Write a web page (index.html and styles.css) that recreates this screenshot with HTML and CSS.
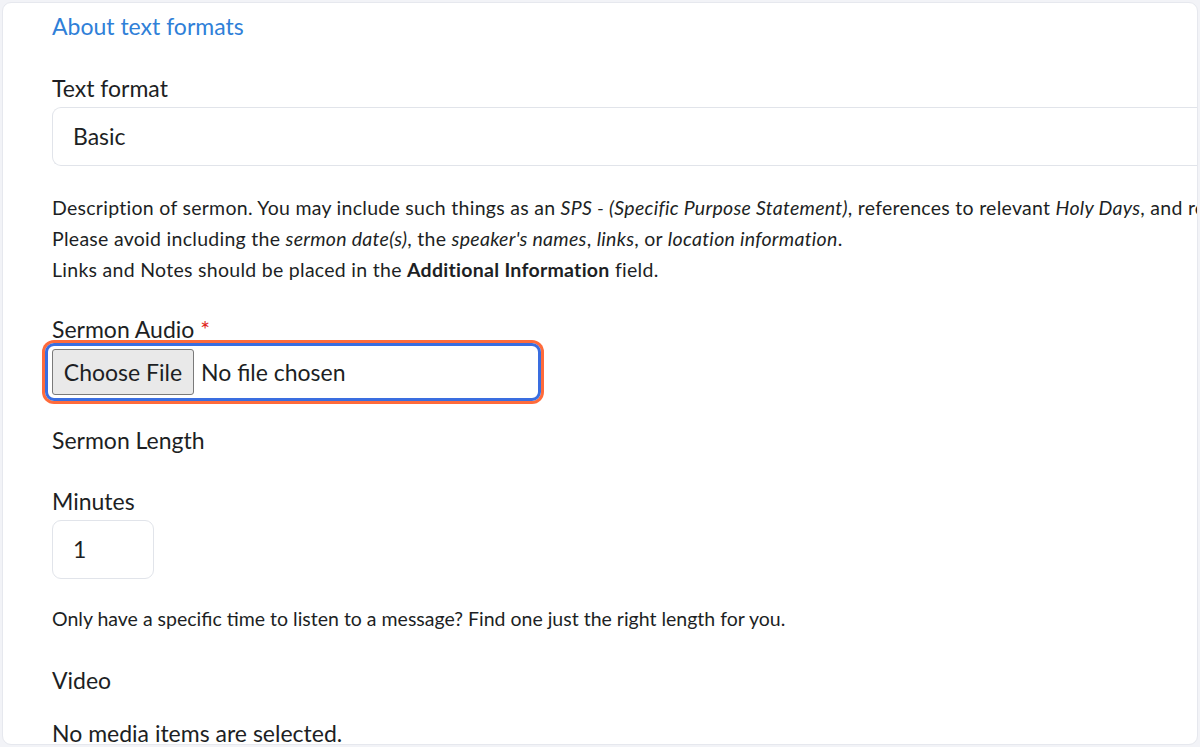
FILE: index.html
```html
<!DOCTYPE html>
<html lang="en">
<head>
<meta charset="utf-8">
<title>Sermon form</title>
<link rel="stylesheet" href="styles.css">
</head>
<body>
<div class="card">
  <a class="link" href="#">About text formats</a>

  <div class="label label-format">Text format</div>
  <div class="select">Basic</div>

  <div class="desc">
    Description of sermon. You may include such things as an <em>SPS - (Specific Purpose Statement)</em>, references to relevant <em>Holy Days</em>, and references to relevant topics.<br>
    Please avoid including the <em>sermon date(s)</em>, the <em>speaker's names</em>, <em>links</em>, or <em>location information</em>.<br>
    Links and Notes should be placed in the <strong>Additional Information</strong> field.
  </div>

  <div class="label label-audio">Sermon Audio <span class="req">*</span></div>
  <div class="file">
    <span class="file-btn">Choose File</span>
    <span class="file-name">No file chosen</span>
  </div>

  <div class="label label-length">Sermon Length</div>
  <div class="label label-minutes">Minutes</div>
  <div class="number">1</div>

  <div class="help">Only have a specific time to listen to a message? Find one just the right length for you.</div>

  <div class="label label-video">Video</div>
  <div class="label label-media">No media items are selected.</div>
</div>
</body>
</html>
```
FILE: styles.css
```css
html, body {
  margin: 0;
  padding: 0;
  height: 100%;
  overflow: hidden;
}
body {
  background: #f2f3f7;
  font-family: Lato, "Open Sans", sans-serif;
  color: #1d1f24;
  padding: 2px 2px 0 2px;
  box-sizing: border-box;
}
.card {
  background: #fff;
  border: 1px solid #e6e8ee;
  border-radius: 9px;
  height: 743px;
  box-sizing: border-box;
  padding: 8px 0 0 49px;
  display: flex;
  flex-direction: column;
  align-items: flex-start;
}
.link {
  font-size: 23px;
  line-height: 30px;
  color: #2f80d8;
  text-decoration: none;
}
.label {
  font-size: 23px;
  line-height: 30px;
}
.label-format { margin-top: 32px; }
.select {
  margin-top: 4px;
  align-self: stretch;
  height: 59px;
  box-sizing: border-box;
  border: 1px solid #e1e4ea;
  border-right: none;
  border-radius: 9px 0 0 9px;
  padding-left: 20px;
  font-size: 23px;
  line-height: 57px;
  flex-shrink: 0;
}
.desc {
  margin-top: 26px;
  align-self: stretch;
  overflow: hidden;
  font-size: 19.5px;
  line-height: 31px;
  white-space: nowrap;
  letter-spacing: 0.28px;
}
.desc em { font-style: italic; }
.desc strong { font-weight: 700; }
.label-audio {
  margin-top: 33px;
  line-height: 22px;
}
.req { color: #e0241b; }
.file {
  margin-top: 3px;
  margin-left: -7px;
  width: 496px;
  height: 58px;
  box-sizing: border-box;
  border: 3px solid #3a6ee0;
  border-radius: 9px;
  box-shadow: 0 0 0 3px #ff6b3b;
  padding: 3px;
  display: flex;
  align-items: center;
  gap: 7px;
  font-size: 23px;
  flex-shrink: 0;
}
.file-btn {
  width: 142px;
  height: 46px;
  box-sizing: border-box;
  background: #e9e9e9;
  border: 1px solid #7a7a7a;
  border-radius: 3px;
  display: flex;
  align-items: center;
  justify-content: center;
  margin-left: 1px;
}
.label-length { margin-top: 24px; }
.label-minutes { margin-top: 31px; }
.number {
  margin-top: 4px;
  width: 102px;
  height: 59px;
  box-sizing: border-box;
  border: 1px solid #e1e4ea;
  border-radius: 9px;
  padding-left: 20px;
  font-size: 23px;
  line-height: 57px;
  flex-shrink: 0;
}
.help {
  margin-top: 28px;
  font-size: 19.5px;
  line-height: 24px;
  letter-spacing: 0;
}
.label-video { margin-top: 34px; }
.label-media {
  margin-top: 27px;
  line-height: 22px;
}
```
